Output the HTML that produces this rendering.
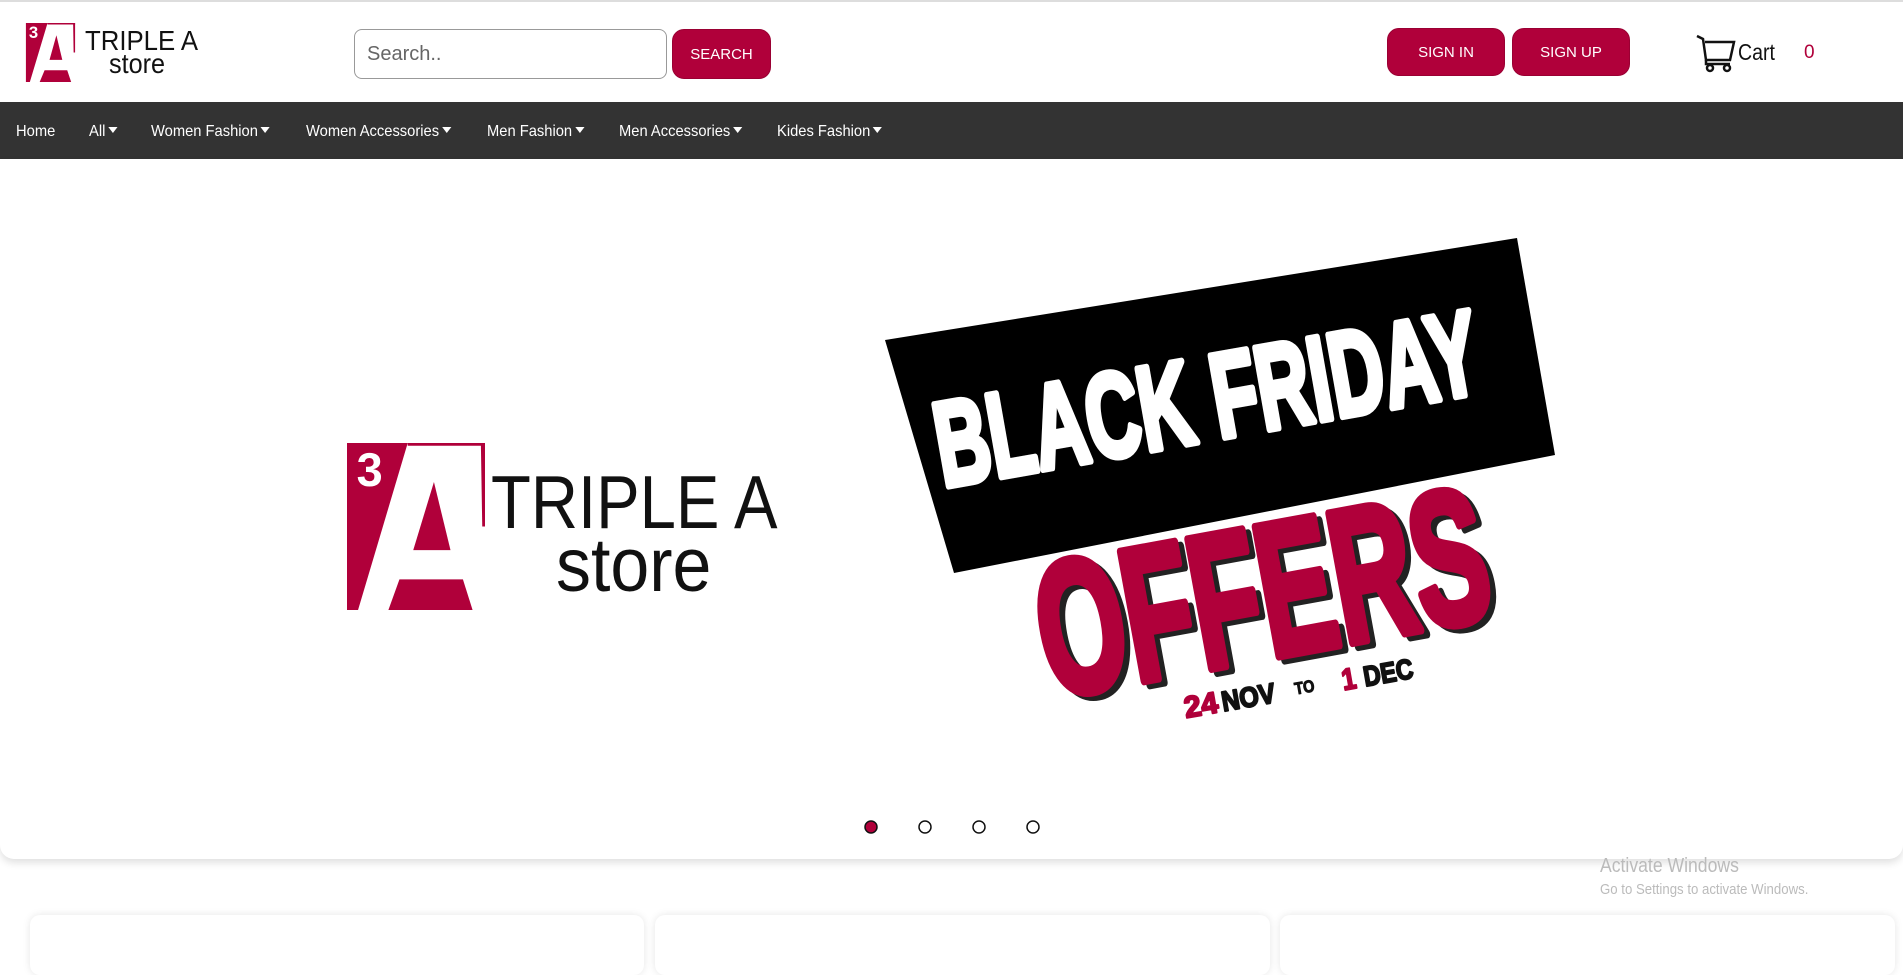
<!DOCTYPE html>
<html><head><meta charset="utf-8"><style>
*{margin:0;padding:0;box-sizing:border-box}
body{width:1903px;height:949px;overflow:hidden;background:#fff;font-family:"Liberation Sans",sans-serif;position:relative}
.abs{position:absolute}
.nar{display:inline-block;transform-origin:0 0;white-space:nowrap}
.btn{position:absolute;background:#b0003a;color:#fff;border-radius:12px;font-size:15px;display:flex;align-items:center;justify-content:center;border:1px solid #9a0033}
.nav{position:absolute;left:0;top:102px;width:1903px;height:57px;background:#333}
.nav span{position:absolute;top:21px;color:#fff;font-size:16px;white-space:nowrap;transform:scaleX(0.92);transform-origin:0 0}
.car{display:inline-block;width:0;height:0;border-left:5px solid transparent;border-right:5px solid transparent;border-top:6px solid #fff;margin-left:3px;vertical-align:3px}
.card{position:absolute;top:915px;height:60px;background:#fff;border-radius:10px;box-shadow:0 0 8px rgba(0,0,0,.1)}
</style></head><body>
<div class="abs" style="left:0;top:0;width:1903px;height:2px;background:#ddd"></div>

<svg class="abs" style="left:22px;top:23px" width="57" height="59" viewBox="0 0 100 120">
<polygon points="0,0 44,0 8,120 0,120" fill="#b0003a"/>
<polygon points="44,0 100,0 100,3 44,3" fill="#b0003a"/>
<polygon points="96,0 100,0 100,60 97,60" fill="#b0003a"/>
<polygon points="62,25 74,75 48,75" fill="#b0003a"/>
<polygon points="38,96 84,96 92,120 28,120" fill="#b0003a"/>
<text x="6" y="30" style="font:bold 34px 'Liberation Sans'" fill="#fff">3</text>
</svg>
<div class="abs nar" style="left:85px;top:27px;font-size:28px;line-height:28px;color:#111;transform:scaleX(0.92)">TRIPLE A</div>
<div class="abs nar" style="left:109px;top:50px;font-size:28px;line-height:28px;color:#111;transform:scaleX(0.9)">store</div>

<div class="abs" style="left:354px;top:29px;width:313px;height:50px;border:1px solid #999;border-radius:8px;font-size:20px;color:#666;padding:13px 12px">Search..</div>
<div class="btn" style="left:672px;top:29px;width:99px;height:50px">SEARCH</div>
<div class="btn" style="left:1387px;top:28px;width:118px;height:48px">SIGN IN</div>
<div class="btn" style="left:1512px;top:28px;width:118px;height:48px">SIGN UP</div>

<svg class="abs" style="left:1696px;top:33px" width="42" height="40" viewBox="0 0 42 40" fill="none" stroke="#111" stroke-width="2.5">
<path d="M1 3 L7 6 L10 27 L34 27 L38 9 L9 9"/>
<path d="M10 27 L10 31 L34 31"/>
<circle cx="14" cy="35" r="3"/><circle cx="31" cy="35" r="3"/>
</svg>
<div class="abs nar" style="left:1738px;top:39px;font-size:23px;color:#111;transform:scaleX(0.85)">Cart</div>
<div class="abs" style="left:1804px;top:42px;font-size:19px;color:#b0003a">0</div>

<div class="nav">
<span style="left:16px">Home</span>
<span style="left:89px">All<i class="car"></i></span>
<span style="left:151px">Women Fashion<i class="car"></i></span>
<span style="left:306px">Women Accessories<i class="car"></i></span>
<span style="left:487px">Men Fashion<i class="car"></i></span>
<span style="left:619px">Men Accessories<i class="car"></i></span>
<span style="left:777px">Kides Fashion<i class="car"></i></span>
</div>

<div class="abs" style="left:0;top:159px;width:1903px;height:700px;background:#fff;border-radius:0 0 14px 14px;box-shadow:0 4px 8px rgba(0,0,0,.12)"></div>

<svg class="abs" style="left:347px;top:443px" width="138" height="167" viewBox="0 0 100 120" preserveAspectRatio="none">
<polygon points="0,0 44,0 8,120 0,120" fill="#b0003a"/>
<polygon points="44,0 100,0 100,2 44,2" fill="#b0003a"/>
<polygon points="97,0 100,0 100,60 98,60" fill="#b0003a"/>
<polygon points="63,28 75,77 48,77" fill="#b0003a"/>
<polygon points="38,98 84,98 91,120 30,120" fill="#b0003a"/>
<text x="7" y="31" style="font:bold 34px 'Liberation Sans'" fill="#fff">3</text>
</svg>
<div class="abs nar" style="left:491px;top:465px;font-size:75px;line-height:75px;color:#111;transform:scaleX(0.87)">TRIPLE A</div>
<div class="abs nar" style="left:556px;top:528px;font-size:76px;line-height:76px;color:#111;transform:scaleX(0.92)">store</div>

<svg class="abs" style="left:0;top:0" width="1903" height="949">
<polygon points="885,340 1517,238 1555,455 954,573" fill="#000"/>
<g transform="translate(943,487) rotate(-10)">
<text x="0" y="0" style="font:bold 120px 'Liberation Sans'" fill="#fff" stroke="#fff" stroke-width="7" stroke-linejoin="round" textLength="550" lengthAdjust="spacingAndGlyphs">BLACK FRIDAY</text>
</g>
<g transform="translate(1050,698) rotate(-10.4)">
<text x="5" y="5" style="font:bold 190px 'Liberation Sans'" fill="#222" stroke="#222" stroke-width="9" stroke-linejoin="round" textLength="455" lengthAdjust="spacingAndGlyphs">OFFERS</text>
<text x="0" y="0" style="font:bold 190px 'Liberation Sans'" fill="#b0003a" stroke="#b0003a" stroke-width="9" stroke-linejoin="round" textLength="455" lengthAdjust="spacingAndGlyphs">OFFERS</text>
</g>
<g transform="translate(1186,718) rotate(-10)" stroke-width="2" stroke-linejoin="round">
<text x="0" y="0" style="font:bold 30px 'Liberation Sans'" fill="#b0003a" stroke="#b0003a" textLength="34" lengthAdjust="spacingAndGlyphs">24</text>
<text x="38" y="0" style="font:bold 28px 'Liberation Sans'" fill="#111" stroke="#111" textLength="54" lengthAdjust="spacingAndGlyphs">NOV</text>
<text x="112" y="-4" style="font:bold 17px 'Liberation Sans'" fill="#111" stroke="#111" stroke-width="1" textLength="20" lengthAdjust="spacingAndGlyphs">TO</text>
<text x="160" y="0" style="font:bold 30px 'Liberation Sans'" fill="#b0003a" stroke="#b0003a" textLength="14" lengthAdjust="spacingAndGlyphs">1</text>
<text x="182" y="0" style="font:bold 28px 'Liberation Sans'" fill="#111" stroke="#111" textLength="50" lengthAdjust="spacingAndGlyphs">DEC</text>
</g>
<circle cx="871" cy="827" r="6" fill="#b0003a" stroke="#111" stroke-width="1.5"/>
<circle cx="925" cy="827" r="6" fill="#fff" stroke="#111" stroke-width="1.5"/>
<circle cx="979" cy="827" r="6" fill="#fff" stroke="#111" stroke-width="1.5"/>
<circle cx="1033" cy="827" r="6" fill="#fff" stroke="#111" stroke-width="1.5"/>
</svg>

<div class="card" style="left:30px;width:614px"></div>
<div class="card" style="left:655px;width:615px"></div>
<div class="card" style="left:1280px;width:615px"></div>

<div class="abs nar" style="left:1600px;top:855px;font-size:20px;color:#bbb;transform:scaleX(0.88)">Activate Windows</div>
<div class="abs nar" style="left:1600px;top:881px;font-size:15px;color:#bbb;transform:scaleX(0.88)">Go to Settings to activate Windows.</div>
</body></html>
